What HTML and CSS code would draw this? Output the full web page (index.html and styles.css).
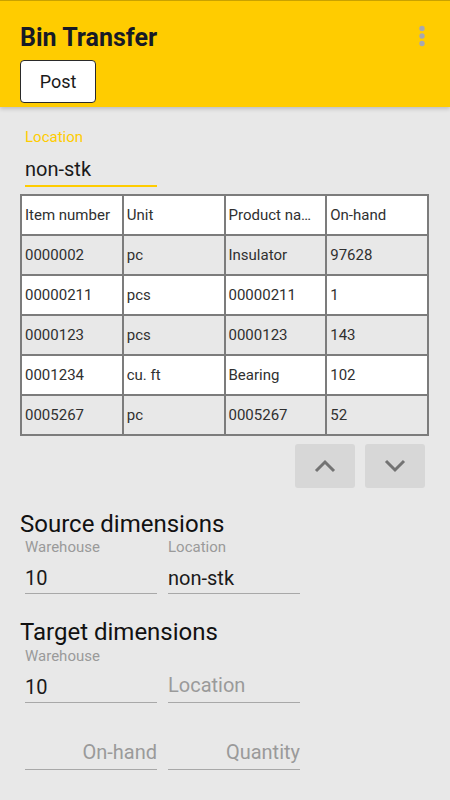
FILE: index.html
```html
<!DOCTYPE html>
<html lang="en">

<head>
    <meta charset="UTF-8">
    <meta name="viewport" content="width=device-width, initial-scale=1.0">
    <title>Bin Transfer</title>
    <link rel="stylesheet" href="styles.css">
</head>

<body>
    <header class="app-bar">
        <div class="bar-top">
            <h1>Bin Transfer</h1>
            <svg class="kebab" width="8" height="24" viewBox="0 0 8 24">
                <circle cx="4" cy="4.5" r="2.7" />
                <circle cx="4" cy="12" r="2.7" />
                <circle cx="4" cy="19.5" r="2.7" />
            </svg>
        </div>
        <button class="post-btn">Post</button>
    </header>

    <main class="content">
        <div class="field field-active">
            <label for="binLocation">Location</label>
            <input type="text" id="binLocation" value="non-stk">
        </div>

        <table class="grid">
            <tr class="head">
                <td>Item number</td>
                <td>Unit</td>
                <td>Product na…</td>
                <td>On-hand</td>
            </tr>
            <tr class="alt">
                <td>0000002</td>
                <td>pc</td>
                <td>Insulator</td>
                <td>97628</td>
            </tr>
            <tr>
                <td>00000211</td>
                <td>pcs</td>
                <td>00000211</td>
                <td>1</td>
            </tr>
            <tr class="alt">
                <td>0000123</td>
                <td>pcs</td>
                <td>0000123</td>
                <td>143</td>
            </tr>
            <tr>
                <td>0001234</td>
                <td>cu. ft</td>
                <td>Bearing</td>
                <td>102</td>
            </tr>
            <tr class="alt">
                <td>0005267</td>
                <td>pc</td>
                <td>0005267</td>
                <td>52</td>
            </tr>
        </table>

        <div class="pager">
            <button class="page-btn" aria-label="Up">
                <svg width="22" height="14" viewBox="0 0 22 14"><path d="M2 12 L11 3 L20 12" /></svg>
            </button>
            <button class="page-btn" aria-label="Down">
                <svg width="22" height="14" viewBox="0 0 22 14"><path d="M2 2 L11 11 L20 2" /></svg>
            </button>
        </div>

        <section class="dims">
            <h2>Source dimensions</h2>
            <div class="field-row">
                <div class="field">
                    <label for="srcWarehouse">Warehouse</label>
                    <input type="text" id="srcWarehouse" value="10">
                </div>
                <div class="field">
                    <label for="srcLocation">Location</label>
                    <input type="text" id="srcLocation" value="non-stk">
                </div>
            </div>
        </section>

        <section class="dims">
            <h2>Target dimensions</h2>
            <div class="field-row">
                <div class="field">
                    <label for="tgtWarehouse">Warehouse</label>
                    <input type="text" id="tgtWarehouse" value="10">
                </div>
                <div class="field">
                    <label class="empty"></label>
                    <input type="text" id="tgtLocation" class="hint" placeholder="Location">
                </div>
            </div>
            <div class="field-row qty-row">
                <div class="field">
                    <input type="text" class="hint num" placeholder="On-hand">
                </div>
                <div class="field">
                    <input type="text" class="hint num" placeholder="Quantity">
                </div>
            </div>
        </section>
    </main>
</body>

</html>
```

FILE: styles.css
```css
body {
    margin: 0;
    font-family: Roboto, "Noto Sans", sans-serif;
    background-color: #e8e8e8;
    color: #1a1a1a;
}

.app-bar {
    background-color: #ffcc00;
    border-top: 1px solid #c9a200;
    height: 107px;
    padding: 0 20px;
    box-sizing: border-box;
    box-shadow: 0 2px 4px rgba(0, 0, 0, 0.18);
}

.bar-top {
    display: flex;
    justify-content: space-between;
    align-items: center;
    height: 59px;
}

.bar-top h1 {
    margin: 0;
    font-size: 25px;
    font-weight: bold;
    color: #171a26;
    padding-top: 13px;
}

.kebab {
    fill: #a8a8b0;
    margin-right: 4px;
    margin-top: 10px;
}

.post-btn {
    width: 76px;
    height: 43px;
    background-color: #fff;
    border: 1px solid #2a2a2a;
    border-radius: 4px;
    font-family: Roboto, sans-serif;
    font-size: 18px;
    color: #1a1a1a;
    padding: 0;
}

.content {
    padding: 22px 21px 0 20px;
}

.field {
    width: 132px;
    margin-left: 5px;
}

.field label {
    display: block;
    font-size: 15px;
    line-height: 16px;
    color: #9a9a9a;
}

.field input {
    display: block;
    width: 100%;
    box-sizing: border-box;
    height: 39px;
    padding: 8px 0 0;
    border: none;
    border-bottom: 1px solid #a8a8a8;
    background: transparent;
    font-family: Roboto, sans-serif;
    font-size: 20px;
    color: #1a1a1a;
    outline: none;
}

.field input::placeholder {
    color: #9a9a9a;
}

.field input.hint {
    padding-top: 4px;
}

.field-active label {
    color: #ffcc00;
}

.field-active input {
    height: 42px;
    padding-top: 7px;
    border-bottom: 2px solid #ffcc00;
}

.grid {
    margin-top: 7px;
    width: 409px;
    border-collapse: collapse;
    table-layout: fixed;
    font-size: 15px;
    color: #303030;
}

.grid td {
    height: 38px;
    padding: 0 0 0 3px;
    border: 2px solid #7c7c7c;
    background-color: #fff;
    white-space: nowrap;
    overflow: hidden;
}

.grid tr.alt td {
    background-color: #e8e8e8;
}

.pager {
    display: flex;
    justify-content: flex-end;
    gap: 10px;
    margin: 8px 4px 0 0;
}

.page-btn {
    width: 60px;
    height: 44px;
    border: none;
    border-radius: 3px;
    background-color: #d7d7d7;
    display: flex;
    align-items: center;
    justify-content: center;
    padding: 0;
}

.page-btn path {
    fill: none;
    stroke: #737373;
    stroke-width: 3;
}

.dims h2 {
    margin: 23px 0 0;
    font-size: 24px;
    font-weight: normal;
    line-height: 26px;
    color: #111;
}

.dims + .dims h2 {
    margin-top: 25px;
}

.field-row {
    display: flex;
    gap: 6px;
    margin-top: 2px;
}

.dims + .dims .field-row {
    margin-top: 3px;
}

.field label.empty {
    height: 16px;
}

.dims + .dims .qty-row {
    margin-top: 28px;
}

.field input.num {
    text-align: right;
}
```
